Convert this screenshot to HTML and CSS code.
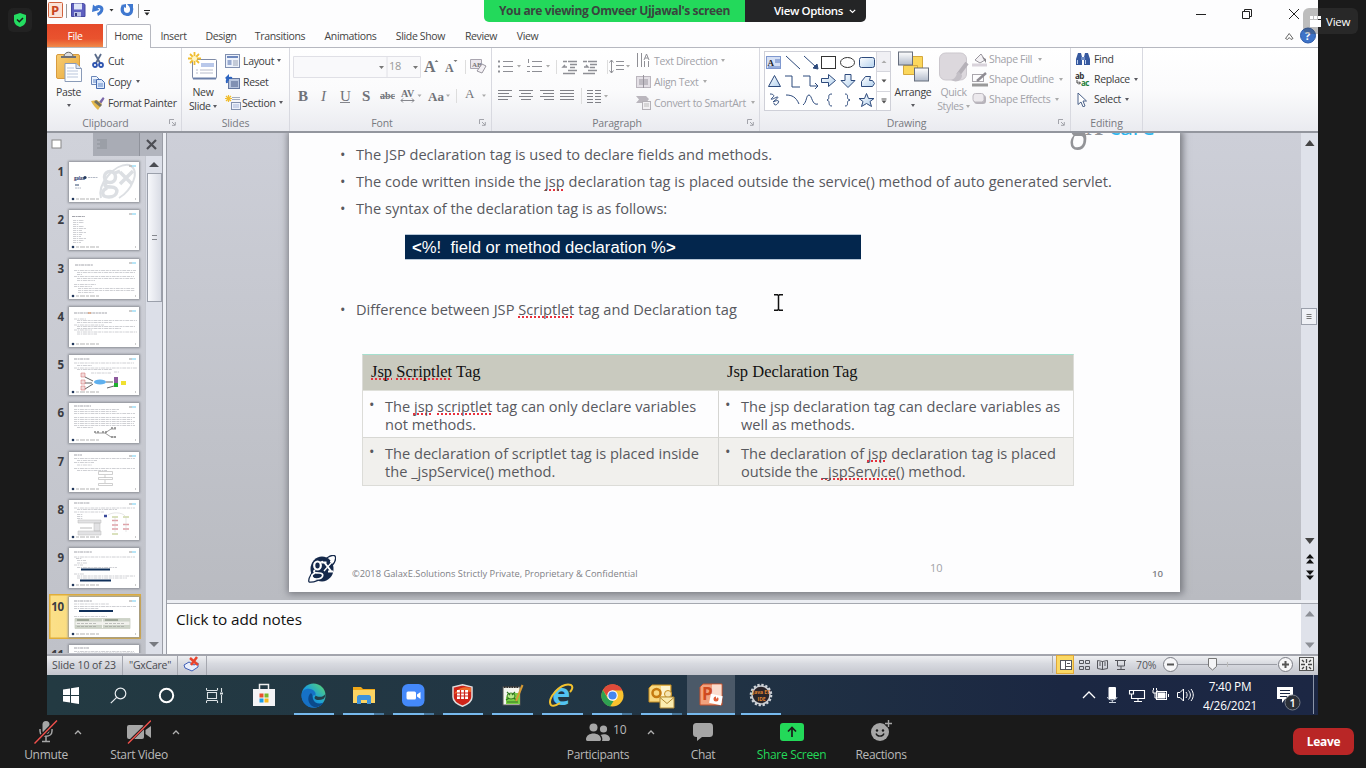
FILE: index.html
```html
<!DOCTYPE html>
<html lang="en">
<head>
<meta charset="utf-8">
<title>Screen share</title>
<link rel="stylesheet" href="styles.css">
</head>
<body>
<svg class="defs" width="0" height="0">
  <defs>
    <linearGradient id="gold" x1="0" y1="0" x2="1" y2="1"><stop offset="0" stop-color="#f7cd72"/><stop offset="1" stop-color="#e9a93c"/></linearGradient>
    <linearGradient id="steel" x1="0" y1="0" x2="0" y2="1"><stop offset="0" stop-color="#fff"/><stop offset="1" stop-color="#b3bccb"/></linearGradient>
    <linearGradient id="sky" x1="0" y1="0" x2="1" y2="1"><stop offset="0" stop-color="#fff"/><stop offset="1" stop-color="#b4d2ee"/></linearGradient>
    <linearGradient id="edge" x1="0" y1="1" x2="1" y2="0"><stop offset="0" stop-color="#0b5fb8"/><stop offset=".5" stop-color="#1c9fd8"/><stop offset="1" stop-color="#5fdc68"/></linearGradient>
    <symbol id="thumb" viewBox="0 0 70 40">
      <path d="M60 4h3" stroke="#bbb" stroke-width="1.500"/><path d="M63 4h4" stroke="#9fdcf5" stroke-width="1.500"/>
      <circle cx="4" cy="37" r="1.300" fill="#23395d"/><path d="M7 37h23" stroke="#aaa" stroke-width=".9" stroke-dasharray="3 1 5 1"/><path d="M66 37h1" stroke="#999"/>
    </symbol>
    <symbol id="gx" viewBox="0 0 28 28">
      <ellipse cx="14" cy="14" rx="11.500" ry="12.500" fill="#15294b"/>
      <path d="M1 27C-2 20 22-4 27 1c3 5-6 13-8 14M1 27c4 1 12-2 18-8" fill="none" stroke="#15294b" stroke-width="1.300"/>
      <g fill="none" stroke="#fff"><ellipse cx="9.500" cy="10.500" rx="3.300" ry="4" stroke-width="2.200"/><path d="M12 7.500l3-1" stroke-width="1.600"/><path d="M7 15c-3 2.500 1 3 4 3 6 0 4.500 6-2.500 6-6 0-6-4-1.500-6" stroke-width="1.700"/><path d="M16 7l7 9M13.500 7.500h5M20 16.500h5" stroke-width="2"/><path d="M25 6l-9 10M22 6.500h4" stroke-width="1.300"/></g>
    </symbol>
    <symbol id="launcher" viewBox="0 0 7 7"><path d="M.5 5V.5H5M3 3l3 3M6.300 3v3.300H3" fill="none" stroke="#9a9ba3" stroke-width=".9"/></symbol>
  </defs>
</svg>

<div class="stage">
  <aside class="side left"><div class="shield"><svg width="14" height="16" viewBox="0 0 14 16"><path d="M7 1l6 2v5c0 4-3 6-6 7-3-1-6-3-6-7V3z" fill="#24dd61"/><path d="M4 7.500l2.300 2.300L10 6" fill="none" stroke="#1a1a1a" stroke-width="1.500"/></svg></div></aside>

  <main class="desktop">
    <header class="titlebar">
      <svg width="110" height="24" viewBox="47 0 110 24">
        <rect x="48.500" y="2.500" width="14" height="15" rx="1" fill="#fbe3d8" stroke="#d0613c"/><text x="51" y="15" class="qat-p">P</text>
        <path d="M66.500 4v14M138.500 4v14" stroke="#999"/>
        <path d="M71.500 3.500h12l1.500 1v12H71.500z" fill="#5d5fc0" stroke="#4648a0"/><path d="M74 3.500h8v6h-8z" fill="#dfe6f8"/><path d="M74 12h7v4.500h-7z" fill="#bcc3e6"/><path d="M75 13h2v3h-2z" fill="#3a3c80"/>
        <path d="M95 8.500c4-4 8-1 6.500 2.500-1 2-2.500 3-4 3.500" fill="none" stroke="#3f78d0" stroke-width="3"/><path d="M92 12l1-7.500 6.500 5.500z" fill="#3f78d0"/>
        <path d="M109.500 9h4l-2 2.500z" fill="#333"/>
        <path d="M123 6c-2 5 0 8 4 8.500 4 0 6-4 4-8" fill="none" stroke="#3f78d0" stroke-width="3.200"/><path d="M127 4h6v7zM121 5l5-1v4z" fill="#3f78d0"/>
        <path d="M144 10.500h6" stroke="#222"/><path d="M144.500 12.500h5l-2.500 3z" fill="#222"/>
      </svg>
      <svg class="winbtns" width="118" height="24" viewBox="1190 0 118 24" fill="none" stroke="#222"><path d="M1196 14.500h10M1242.500 11.500h7v7h-7zM1244.500 11v-1.500h7v7H1250M1289 9l10 10M1299 9l-10 10"/></svg>
    </header>

    <nav class="tabs">
      <span class="tab file">File</span><span class="tab home">Home</span><span class="tab t-insert">Insert</span><span class="tab t-design">Design</span><span class="tab t-trans">Transitions</span><span class="tab t-anim">Animations</span><span class="tab t-show">Slide Show</span><span class="tab t-review">Review</span><span class="tab t-view">View</span>
      <svg class="help" width="36" height="22" viewBox="1282 25 36 22"><path d="M1285.500 38.500l3.700-5 3.800 5-2 1-1.800-2-1.700 2z" fill="#fff" stroke="#666"/><circle cx="1308" cy="35.500" r="7.500" fill="#3e73c8" stroke="#2a58a8"/><text x="1305" y="40" class="q">?</text></svg>
    </nav>

    <section class="ribbon">
      <div class="group g-clip">
        <div class="body">
          <div class="big w-paste">
            <svg width="28" height="32" viewBox="0 0 28 32"><rect x="1.500" y="3.500" width="23" height="24" rx="1.500" fill="url(#gold)" stroke="#d89b3f"/><path d="M6 5h15v2H6z" fill="#6e7078"/><path d="M9 5c1-5 8-5 9 0" fill="#ddd" stroke="#666"/><path d="M10 12.500h11l5.500 5v13H10z" fill="#fdfeff" stroke="#8a9bb8"/><path d="M12 17h7M12 20h11M12 23h11M12 26h11" stroke="#b9c6dc"/><path d="M21 12.500v5h5.500" fill="#dde7f5" stroke="#8a9bb8"/></svg>
            <span>Paste</span><i class="caret dk"></i>
          </div>
          <div class="rows r21 clip-rows">
            <div class="row"><svg width="14" height="16" viewBox="0 0 14 16"><path d="M4 1l5 9M10 1L5 10" stroke="#5a6b8a" stroke-width="1.800"/><circle cx="4" cy="12" r="2" fill="none" stroke="#2f55b0" stroke-width="1.800"/><circle cx="10" cy="12" r="2" fill="none" stroke="#2f55b0" stroke-width="1.800"/></svg><span>Cut</span></div>
            <div class="row w-copy"><svg width="14" height="14" viewBox="0 0 14 14"><path d="M.5 1.500h5l3 3v5h-8z" fill="#eef4fd" stroke="#6b86b8"/><path d="M5.500 4.500h5l3 3v6h-8z" fill="#dce8fa" stroke="#456bb0"/><path d="M2 5h3M2 7h3M7 9h5M7 11h5" stroke="#5f86c8"/></svg><span>Copy</span><i class="caret dk"></i></div>
            <div class="row"><svg width="14" height="14" viewBox="0 0 14 14"><path d="M8 6l4-5 1.500 1.500L10 8z" fill="#7a67a8"/><path d="M0 5l6-1 5 4-4 6C4 11 2 9 0 5z" fill="#e3b84c"/><path d="M5 4l6 5-2 2-6-5z" fill="#6e6e62"/></svg><span>Format Painter</span></div>
          </div>
        </div>
        <div class="cap l">Clipboard<svg class="ln" width="7" height="7"><use href="#launcher"/></svg></div>
      </div>
      <div class="group g-slides">
        <div class="body">
          <div class="big w-new">
            <svg width="32" height="32" viewBox="0 0 32 32"><rect x="5.500" y="8.500" width="24" height="19" rx="1" fill="#fff" stroke="#7f8ba6"/><path d="M6 27.500h23" stroke="#6b7fa8" stroke-width="2"/><path d="M14 14h13" stroke="#b9c8ea" stroke-width="4"/><path d="M9 19h2M13 19h13M9 22h2M13 22h13" stroke="#b8bccb"/><path d="M7.500 1v13M1 7.500h13M3 3l9 9M12 3l-9 9" stroke="#f0bd2f" stroke-width="1.800"/><circle cx="7.500" cy="7.500" r="2.500" fill="#fff6c5"/></svg>
            <span>New</span><span class="inl">Slide <i class="caret dk"></i></span>
          </div>
          <div class="rows r21 slide-rows">
            <div class="row w-lay"><svg width="15" height="14" viewBox="0 0 15 14"><rect x=".5" y=".5" width="14" height="13" fill="#edf2fb" stroke="#8190b0"/><path d="M2 3h11" stroke="#6d87bd" stroke-width="2"/><path d="M2.500 6h4v5h-4z" fill="#99abd0"/><path d="M8 7h5M8 9h5M8 11h5" stroke="#9aa3b5"/></svg><span>Layout</span><i class="caret dk"></i></div>
            <div class="row"><svg width="15" height="15" viewBox="0 0 15 15"><rect x="3.500" y="4.500" width="11" height="10" fill="#b8c5de" stroke="#6578a0"/><path d="M6 8h7M6 10h7M6 12h7" stroke="#4a5c88"/><path d="M2 9c-1-4 2-6 5-5" fill="none" stroke="#2d64c0" stroke-width="2"/><path d="M0 4l4-4v7z" fill="#2d64c0"/></svg><span>Reset</span></div>
            <div class="row w-sec"><svg width="16" height="15" viewBox="0 0 16 15"><path d="M7 2.500h8M7 4.500h8" stroke="#a5adbb"/><rect x="6.500" y="7.500" width="9" height="7" fill="#eef2fa" stroke="#8391ad"/><path d="M8 10h6M8 12h6" stroke="#a9b7d8"/><path d="M3.500 0v7M0 3.500h7M1 1l5 5M6 1L1 6" stroke="#f0bd2f" stroke-width="1.200"/></svg><span>Section</span><i class="caret dk"></i></div>
          </div>
        </div>
        <div class="cap">Slides</div>
      </div>
      <div class="group g-font">
        <svg class="strip" width="200" height="68" viewBox="290 48 200 68">
          <path d="M293.500 56.500h93.500v21h-93.500zM387 56.500h33.500v21H387" fill="#f9f9fb" stroke="#e0e0e6"/>
          <path d="M379 66h5l-2.500 3zM413 66h5l-2.500 3z" fill="#777"/>
          <text x="389" y="70" class="sz">18</text>
          <g class="sf" fill="#707278"><text x="424" y="72" font-size="16" font-weight="bold">A</text><text x="445" y="72" font-size="12" font-weight="bold">A</text>
            <text x="298" y="101" font-size="15" font-weight="bold">B</text><text x="321" y="101" font-size="15" font-style="italic">I</text><text x="340" y="101" font-size="15">U</text><text x="362" y="101" font-size="15" font-weight="bold">S</text><text x="380" y="99" font-size="10" font-weight="bold">abc</text><text x="401" y="97" font-size="10" font-weight="bold">AV</text><text x="428" y="101" font-size="13" font-weight="bold">Aa</text><text x="465" y="98" font-size="13">A</text></g>
          <path d="M340 102.500h10M380 96.500h15M401 100.500h13M403 98.500l-2 2 2 2M412 98.500l2 2-2 2" fill="none" stroke="#85868c"/>
          <path d="M434.500 62l2-2 2 2zM453.500 60h4l-2 2z" fill="#777"/>
          <path d="M465.500 60v14M456.500 89v14" stroke="#ddd"/>
          <path d="M417.500 94.500h4l-2 2.500zM446 94.500h4l-2 2.500zM482 94.500h4l-2 2.500z" fill="#aaa"/>
          <path d="M470.500 59.500h11v9h-11z" fill="#ece8ee" stroke="#aaa6b0"/><text x="472" y="67" font-size="7" font-weight="bold" class="sf" fill="#777">AB</text><path d="M477 71l5-7 4 2-4 7z" fill="#f4f1f5" stroke="#9a97a0"/>
        </svg>
        <div class="cap l">Font<svg class="ln" width="7" height="7"><use href="#launcher"/></svg></div>
      </div>
      <div class="group g-para">
        <div class="body">
          <svg class="pstrip" width="141" height="68" viewBox="492 48 141 68" fill="none" stroke="#8e8f95">
            <path d="M503 61.500h10M503 66.500h10M503 71.500h10M532 61.500h10M532 66.500h10M532 71.500h10"/><path d="M498 61.500h2M498 66.500h2M498 71.500h2" stroke-width="2"/><path d="M528.500 59v4M527 66.500h3M527 71.500h3"/>
            <path d="M563 61.500h4M568 61.500h9M570 64.500h7M570 67.500h5M568 70.500h9M563 73.500h12M583 61.500h4M588 61.500h9M590 64.500h7M590 67.500h5M588 70.500h9M583 73.500h12M567 67H563l2-2M584 67h4l-2-2" stroke-width="1.400"/>
            <path d="M616 61.500h8M616 65.500h8M616 69.500h8M611.500 60v13M609.500 62.500l2-2.500 2 2.500M609.500 70.500l2 2.500 2-2.500"/>
            <path d="M498 90.500h14M498 93.500h11M498 96.500h14M498 99.500h10M519 90.500h14M521 93.500h10M519 96.500h14M521 99.500h10M540 90.500h14M543 93.500h11M540 96.500h14M544 99.500h10M560 90.500h14M560 93.500h14M560 96.500h14M560 99.500h14M587 90.500h6M595 90.500h6M587 93.500h6M595 93.500h6M587 96.500h6M595 96.500h6M587 99.500h6M595 99.500h6M587 102.500h6M595 102.500h6" stroke="#808187"/>
            <path d="M556.500 60v14M607.500 60v14M581.500 88v16" stroke="#ddd"/>
            <path d="M517 65h4l-2 2.500zM546 65h4l-2 2.500zM626 65h4l-2 2.500zM604 95h4l-2 2.500z" fill="#aaa" stroke="none"/>
          </svg>
          <div class="rows r21 para-rows off">
            <div class="row w-td"><svg width="15" height="15" viewBox="0 0 15 15" stroke="#8f8f95" fill="none"><path d="M1.500 0v14M5.500 0v14M8.500 8v6M12.500 8v6M8 7l2.500-6L13 7M9 5h3"/></svg><span>Text Direction</span><i class="caret"></i></div>
            <div class="row w-at"><svg width="15" height="15" viewBox="0 0 15 15"><rect x=".5" y="2.500" width="14" height="11" fill="#e4e0e6" stroke="#bbb6be"/><path d="M3 6h9M3 8h9M3 10h9M7.500 1v13" stroke="#99959e"/></svg><span>Align Text</span><i class="caret"></i></div>
            <div class="row w-sa"><svg width="15" height="15" viewBox="0 0 15 15"><path d="M0 1h10l3 3-3 4H0l3-3.500z" fill="#bab6bd"/><rect x="6.500" y="6.500" width="8" height="8" fill="#f2f0f3" stroke="#b3b0b6"/><path d="M8 9h5M8 11h5" stroke="#bbb"/></svg><span>Convert to SmartArt</span><i class="caret"></i></div>
          </div>
        </div>
        <div class="cap l">Paragraph<svg class="ln" width="7" height="7"><use href="#launcher"/></svg></div>
      </div>
      <div class="group g-draw">
        <div class="body">
          <svg class="gallery" width="127" height="60" viewBox="764 51 127 60">
            <rect x="764.500" y="51.500" width="126" height="59" fill="#fff" stroke="#cfd0d8"/><path d="M876.500 52v58M877 71.500h13M877 91.500h13" stroke="#d5d6dd"/><path d="M877 52h13v19h-13z" fill="#f0f0f4"/>
            <path d="M881.500 63h5l-2.500-2.500z" fill="#aaa"/><path d="M881.500 79.500h5l-2.500 3zM881.500 100.500h5l-2.500 3zM881.500 98.500h5v1h-5z" fill="#555"/>
            <rect x="766.500" y="56.500" width="14" height="12" fill="#d5e0f5" stroke="#7f98cf"/><text x="767.500" y="66" class="sf" font-size="9" font-weight="bold" fill="#222">A</text><path d="M775 60h5M775 62h5M768 67h12" stroke="#5578c0"/>
            <g fill="none" stroke="#2d4a7c">
              <path d="M786 56l14 13M804 56l12 11"/><path d="M818 69l-1-5-4 4z" fill="#2d4a7c"/><rect x="821.500" y="56.500" width="14" height="12" stroke="#333"/><ellipse cx="847.500" cy="62.500" rx="7" ry="5" stroke="#333"/><rect x="859.500" y="57.500" width="15" height="10" rx="2" fill="url(#sky)"/>
              <path d="M768.500 86.500l6-11 6 11z" fill="url(#sky)"/><path d="M785 76h7v11h8M803 76h7v10h8M815 83l3 3-3 3"/><path d="M821.500 78.500h7v-4l7 6-7 6v-4h-7z" fill="url(#sky)"/><path d="M845 74.500h6v6h4l-7 7-7-7h4z" fill="url(#sky)"/><path d="M861.500 86.500v-5l4-5h5l-1 4h3l2 3-2 3z" fill="url(#sky)"/>
              <path d="M770 94c4 0 5 2 2 4-3 3 3 0 5-1 3 0-2 3-4 5 4-2 7-2 5 1-1 2-4 3-4 0"/><path d="M786 95c6 0 10 2 13 9M803 105c4-3 3-10 6-10s3 11 9 9"/><path d="M832 94c-6 0-1 5-5 6 4 1 0 6 5 6M845 94c5 0 0 5 5 6-5 1 0 6-5 6"/><path d="M866.500 93.500l2 5h5.500l-4 3 1.500 5-5-3-5 3 1.500-5-4-3h5.500z" fill="url(#sky)"/>
            </g>
          </svg>
          <div class="big w-arr">
            <svg width="32" height="32" viewBox="0 0 32 32"><path d="M11.500 5.500h14v13h-14z" fill="#fbd75c" stroke="#d5a83c"/><path d="M6.500 14.500h14v9h-14z" fill="#fbd75c" stroke="#d5a83c"/><rect x="1.500" y="1" width="14" height="13" fill="url(#steel)" stroke="#666e7d"/><rect x="17.500" y="17" width="14" height="13" fill="url(#steel)" stroke="#666e7d"/></svg>
            <span>Arrange</span><i class="caret dk"></i>
          </div>
          <div class="big w-qs off">
            <svg width="31" height="32" viewBox="0 0 31 32"><rect x="1.500" y="2" width="27" height="27" rx="6" fill="#dcd8dd" stroke="#cbc7cd"/><path d="M29 12l-9 12" stroke="#b5b1b8" stroke-width="4"/><path d="M21 21c-3 0-2 7-8 8 5 3 11 1 11-5z" fill="#c3bfc6"/></svg>
            <span>Quick</span><span class="inl">Styles <i class="caret"></i></span>
          </div>
          <div class="rows r20 off">
            <div class="row w-sf"><svg width="16" height="15" viewBox="0 0 16 15"><path d="M3 8l6-6 4 6-5 3z" fill="#f4f2f5" stroke="#99959d"/><path d="M10 5l4 2v4z" fill="#8a878e"/><path d="M0 13h15" stroke="#d9d3db" stroke-width="3"/></svg><span>Shape Fill</span><i class="caret"></i></div>
            <div class="row w-so"><svg width="16" height="15" viewBox="0 0 16 15"><rect x=".5" y="2.500" width="11" height="7" fill="none" stroke="#a9a6ac"/><path d="M5 9l9-8" stroke="#8f8c93" stroke-width="2.500"/><path d="M0 13h16" stroke="#999" stroke-width="3"/></svg><span>Shape Outline</span><i class="caret"></i></div>
            <div class="row w-se"><svg width="16" height="15" viewBox="0 0 16 15"><rect x="2" y="3" width="12" height="9" rx="3" fill="#b7b3ba"/><rect x="1" y="1.500" width="11" height="8.500" rx="2.500" fill="#ece9ed" stroke="#bcb8bf"/></svg><span>Shape Effects</span><i class="caret"></i></div>
          </div>
        </div>
        <div class="cap l">Drawing<svg class="ln" width="7" height="7"><use href="#launcher"/></svg></div>
      </div>
      <div class="group g-edit">
        <div class="body">
          <div class="rows r20 edit-rows">
            <div class="row"><svg width="16" height="14" viewBox="0 0 16 14"><path d="M3 1h3l1 4v8H1V7zM10 1h3l2 6v6H9V5z" fill="#37599f"/><path d="M6 5h4v3H6z" fill="#6f8cc4"/><path d="M2.500 8v4M10.500 8v4" stroke="#bcd0f0"/></svg><span>Find</span></div>
            <div class="row w-rep"><svg width="16" height="15" viewBox="0 0 16 15"><text x="0" y="7" class="ab" fill="#333">ab</text><text x="6" y="14" class="ab" fill="#23803a">ac</text><path d="M2 8v3h3M4 9.500l1.500 1.500L4 12.500" fill="none" stroke="#444"/></svg><span>Replace</span><i class="caret dk"></i></div>
            <div class="row w-sel"><svg width="16" height="15" viewBox="0 0 16 15"><path d="M3 1l8.500 8H8l2 5-2 .8L6 10l-3 2.500z" fill="#fff" stroke="#4b6188"/></svg><span>Select</span><i class="caret dk"></i></div>
          </div>
        </div>
        <div class="cap">Editing</div>
      </div>
    </section>

    <section class="work">
      <div class="outline">
        <div class="otabs"><span class="ot on"><svg width="12" height="11"><rect x="2" y="1" width="9" height="8" fill="#fff" stroke="#888"/></svg></span><span class="ot"><svg width="12" height="11"><path d="M1 1h10M4 3h7M1 5h10M4 7h7M1 9h10" stroke="#8d9199" stroke-width="1.200"/></svg></span><span class="ox"><svg width="11" height="11"><path d="M1 1l9 9M10 1L1 10" stroke="#4c4e54" stroke-width="2.200"/></svg></span></div>
        <div class="obody">
          <div class="thumbs">
            <div class="th"><b>1</b><svg class="sl" width="70" height="40"><g fill="none" stroke="#dcdfe3" stroke-width="3.500"><path d="M32 36c-4-14 14-35 28-33 13 5 2 26-10 33" stroke-width="2"/><circle cx="41" cy="15" r="5.500"/><path d="M46 11l5-2M38 20c-5 4 0 5 4 5 9 0 7 10-2 10-8 0-8-6-2-9M51 10l12 12M64 9L51 22"/></g><use href="#thumb"/><text x="5" y="17.500" class="tiny">galax</text><circle cx="16" cy="15.500" r="1.600" fill="#23395d"/><path d="M19 15.500h10M6 26h6" stroke="#b4bac6" stroke-dasharray="2 .5"/><path d="M6 23h4" stroke="#33496d"/></svg></div>
            <div class="th"><b>2</b><svg class="sl" width="70" height="40"><use href="#thumb"/><path d="M3 6.500h13" class="tl"/><path d="M4 10.500h11M4 12.500h11M4 14.500h6M4 16.500h11M4 18.500h13M4 20.500h9M4 22.500h13M4 24.500h9M4 26.500h8M4 28.500h13M4 30.500h11M4 32.500h8" class="tx"/></svg></div>
            <div class="th"><b>3</b><svg class="sl" width="70" height="40"><use href="#thumb"/><path d="M6 6h18" class="tl"/><path d="M5 11.500h62M8 13.500h58M8 15.500h5M5 17.500h60M8 19.500h58M8 21.500h18M5 25.500h22M5 27.500h18M9 29.500h57M9 31.500h57M9 33.500h16" class="tx"/></svg></div>
            <div class="th"><b>4</b><svg class="sl" width="70" height="40"><use href="#thumb"/><path d="M5 6h33" class="tl"/><path d="M19 6h3" stroke="#e08a50"/><path d="M5 12h12M8 13.500h60M8 15.500h35M5 18h30M8 19.500h58M8 21.500h44M5 23h18M8 25h60M8 27h20" class="tx"/></svg></div>
            <div class="th"><b>5</b><svg class="sl" width="70" height="40"><use href="#thumb"/><path d="M5 4h16" class="tl"/><path d="M5 8h60M8 10.500h15M5 13h63M8 14.500h35M22 18h20M45 17h5" class="tx"/><path d="M16 22l8 4M16 34l8-5M16 28h7M37 27h7M38 33l7-2" stroke="#222" stroke-width=".7"/><path d="M12 18h4v4h-4zM12 25h4v4h-4zM12 31h4v4h-4z" fill="#f2dada" stroke="#c66" stroke-width=".5"/><ellipse cx="31" cy="27" rx="6" ry="2.500" fill="#5fb0ee"/><path d="M45 22h4v6h-4z" fill="#8d5a9d"/><path d="M45 28h4v4h-4z" fill="#20b030"/><path d="M52 26h5v4h-5z" fill="#f0e030"/></svg></div>
            <div class="th"><b>6</b><svg class="sl" width="70" height="40"><use href="#thumb"/><path d="M5 3h17" class="tl"/><path d="M5 6.500h45M5 8.500h43M5 10.500h61M5 14.500h61M5 16.500h58M5 18.500h61M5 20.500h60M5 22.500h61M8 24.500h16" class="tx"/><path d="M26 30h10l6-4h5M36 30l6 4h5" stroke="#555" stroke-width=".6" fill="none"/><path d="M25 29h6M33 29h5M42 25h5M42 34h6" stroke="#888" stroke-width="1.500" stroke-dasharray="2 1"/></svg></div>
            <div class="th"><b>7</b><svg class="sl" width="70" height="40"><use href="#thumb"/><path d="M5 3h8" class="tl"/><path d="M5 6.500h61M8 8.500h20M5 10.500h20M8 13h15M5 16.500h61M8 18.500h30" class="tx"/><path d="M29.500 19.500h14v3h-14zM29.500 25.500h14v2h-14zM29.500 31.500h14v2h-14zM36 23v3M36 28v3" fill="none" stroke="#bbb" stroke-width=".7"/></svg></div>
            <div class="th"><b>8</b><svg class="sl" width="70" height="40"><use href="#thumb"/><path d="M5 3h16" class="tl"/><path d="M5 8h61M8 9.500h40M5 12h30M8 14.500h6M8 16.500h6M8 18.500h6" class="tx"/><path d="M9 20h23v3H9zM9 31h23v4H9zM25 23h6v8h-6z" fill="#e2e2e4" stroke="#bbb" stroke-width=".5"/><path d="M11 28h12" stroke="#bbb"/><path d="M35 16h3" stroke="#3a4a9a" stroke-width="2.500"/><path d="M43 17h6M54 17h6M43 34h6" stroke="#b5c47c" stroke-width="1.200"/><path d="M43 20.500h6M43 25h6M43 29h6M54 24.500h6M54 29h6" stroke="#dfa0a6" stroke-width="1.500"/><path d="M57 17v15M46 17v15M39 15c4-3 14-3 17 1" fill="none" stroke="#ccc" stroke-width=".5"/></svg></div>
            <div class="th"><b>9</b><svg class="sl" width="70" height="40"><use href="#thumb"/><path d="M5 4h18" class="tl"/><path d="M5 9h61M7 10.500h6M8 12.500h9M8 15h10M5 17h9M8 19.500h40M5 26h10M8 28h58M8 30h50" class="tx"/><path d="M12 21.500h29M11 32.500h31" stroke="#10305a" stroke-width="2"/></svg></div>
            <div class="th cur"><b>10</b><svg class="sl" width="70" height="40"><use href="#thumb"/><path d="M5 4h18" class="tl"/><path d="M5 7h35M5 9.500h62M5 11.500h25M5 19.500h33" class="tx"/><path d="M10 14h34" stroke="#10305a" stroke-width="2"/><path d="M6 21.500h55v10H6z" fill="#f1f1ed" stroke="#c3c8bc" stroke-width=".7"/><path d="M6 21.500h55v3H6zM6 28h55v3H6z" fill="#cdd3c8"/><path d="M33.500 22v9" stroke="#f4f4f0"/><path d="M8 23h12M36 23h13" stroke="#667060" stroke-width=".9"/><path d="M8 26.500h20M36 26.500h20M8 29.500h20M36 29.500h20" stroke="#9a9c98" stroke-width=".6" stroke-dasharray="3 1"/></svg></div>
            <div class="th"><b>11</b><svg class="sl" width="70" height="40"><path d="M5 3h15" class="tl"/><path d="M5 6.500h60M8 8h58" class="tx"/></svg></div>
          </div>
          <div class="osb"><i class="up"></i><div class="knob"><i></i></div><i class="down"></i></div>
        </div>
      </div>
      <div class="split"></div>
      <div class="pane">
        <div class="canvas">
          <div class="view">
            <article class="slide">
              <div class="brand"><span class="bg">g</span><span class="bx">x</span><span class="bc">care</span></div>
              <ul class="pts">
                <li>The JSP declaration tag is used to declare fields and methods.</li>
                <li class="long">The code written inside the <u>jsp</u> declaration tag is placed outside the service() method of auto generated servlet.</li>
                <li>The syntax of the declaration tag is as follows:</li>
              </ul>
              <div class="code"><b>&lt;</b>%!&nbsp; field or method declaration %<b>&gt;</b></div>
              <ul class="pts second"><li class="long">Difference between JSP <u>Scriptlet</u> tag and Declaration tag</li></ul>
              <div class="table">
                <div class="hd"><u>Jsp</u> <u>Scriptlet</u> Tag</div><div class="hd r">Jsp Declaration Tag</div>
                <div class="td">The <u>jsp</u> <u>scriptlet</u> tag can only declare variables<br>not methods.</div><div class="td r">The jsp declaration tag can declare variables as<br>well as methods.</div>
                <div class="td alt">The declaration of scriptlet tag is placed inside<br>the _jspService() method.</div><div class="td alt r">The declaration of <u>jsp</u> declaration tag is placed<br>outside the <u>_jspService</u>() method.</div>
              </div>
              <footer class="foot"><svg width="28" height="28"><use href="#gx"/></svg><span class="copy">©2018 GalaxE.Solutions Strictly Private, Proprietary &amp; Confidential</span><span class="n1">10</span><span class="n2">10</span></footer>
              <svg class="ibeam" width="11" height="17" viewBox="0 0 11 17"><path d="M1 .8h3.500l1 1 1-1H10M1 16.200h3.500l1-1 1 1H10M5.500 2v13" fill="none" stroke="#111" stroke-width="1.500"/></svg>
            </article>
          </div>
          <svg class="vsb" width="17" height="467" viewBox="1301 133 17 467"><path d="M1305 146h9.500l-4.700-6z" fill="#444"/><rect x="1301.500" y="308.500" width="15" height="16" fill="#eff1f6" stroke="#9ba0ab"/><path d="M1306.500 314.500h5M1306.500 316.500h5M1306.500 318.500h5" stroke="#777"/><path d="M1305 538h9.500l-4.700 6z" fill="#444"/><path d="M1306 558.500h8l-4-4.500zM1306 563.500h8l-4-4.500zM1306 570.500h8l-4 4.500zM1306 575.500h8l-4 4.500z" fill="#111"/></svg>
        </div>
        <div class="notes"><span>Click to add notes</span><svg class="nsb" width="17" height="49" viewBox="1301 604 17 49"><path d="M1305 616h9.500l-4.700-5.500zM1305 642h9.500l-4.700 5.500z" fill="#8c8f96"/></svg></div>
      </div>
    </section>

    <section class="status">
      <span class="s1">Slide 10 of 23</span><span class="s2">"GxCare"</span>
      <span class="s3"><svg width="18" height="16" viewBox="0 0 18 16"><path d="M1 9l5-3 5 3 4-2v4l-6 4-7-3z" fill="#e8eefb" stroke="#3f5fb8"/><path d="M7 2l8 7M14 1L8 9" stroke="#e8432c" stroke-width="2.500"/></svg></span>
      <svg class="zoomer" width="264" height="21" viewBox="1054 654 264 21">
        <path d="M1052.500 656v17" stroke="#aaa"/><rect x="1056.500" y="655.500" width="17" height="18" fill="#fbd964" stroke="#dfa838"/>
        <g fill="none" stroke="#55565c"><rect x="1060.500" y="660.500" width="11" height="9" fill="#fff"/><path d="M1065.500 661v8M1066 666.500h5M1067 663.500h3"/><path d="M1079.500 660.500h4v3h-4zM1085.500 660.500h4v3h-4zM1079.500 666.500h4v3h-4zM1085.500 666.500h4v3h-4z"/><path d="M1097.500 660.500l5 1 5-1v8l-5 1-5-1zM1102.500 661v9M1099 663h2M1099 665h2M1104 663h2M1104 665h2"/><path d="M1115 660.500h11M1117.500 661v5h7v-5M1121 666v3M1117 669.500h8"/></g>
        <text x="1136" y="669" class="pct">70%</text>
        <path d="M1178 664.500h99" stroke="#9a9ca4"/><path d="M1227.500 662v5" stroke="#bbb"/>
        <circle cx="1170.500" cy="664.500" r="7" fill="#f6f6f8" stroke="#7b7d85"/><path d="M1167 664.500h7" stroke="#555" stroke-width="2"/>
        <circle cx="1285.500" cy="664.500" r="7" fill="#f6f6f8" stroke="#7b7d85"/><path d="M1282 664.500h7M1285.500 661v7" stroke="#555" stroke-width="2"/>
        <path d="M1208.500 658.500h8v8l-4 3.500-4-3.500z" fill="#f4f4f6" stroke="#777"/>
        <rect x="1299.500" y="657.500" width="14" height="13" fill="#eee" stroke="#555"/><path d="M1306.500 659v4M1306.500 666v4M1301 664.500h4M1308 664.500h4M1302 660l2 2M1311 660l-2 2M1302 669l2-2M1311 669l-2-2" stroke="#444" stroke-width="1.300"/>
      </svg>
    </section>

    <section class="taskbar">
      <div class="tk s"><svg width="16" height="17" viewBox="0 0 16 17"><path d="M0 2.500l7-1V8H0zM8 1.300L16 0v8H8zM0 9h7v6.500l-7-1zM8 9h8v8l-8-1.200z" fill="#fff"/></svg></div>
      <div class="tk s"><svg width="17" height="17" viewBox="0 0 17 17" fill="none" stroke="#e9edf0" stroke-width="1.200"><circle cx="10.500" cy="6.500" r="5.300"/><path d="M6.700 10.300L.8 16.200"/></svg></div>
      <div class="tk s"><svg width="17" height="17"><circle cx="8.500" cy="8.500" r="6.700" fill="none" stroke="#fff" stroke-width="2"/></svg></div>
      <div class="tk s"><svg width="17" height="17" fill="none" stroke="#dde3e6" stroke-width="1.100"><path d="M.5 3.500h11M1.500 5.500h9v6h-9zM.5 13.500h11M.5 1v2M11.500 1v2M.5 14v2M11.500 14v2M15.500 1v4M15.500 8v8"/><path d="M14 6.500h3" stroke-width="2"/></svg></div>
      <div class="tk"><svg width="24" height="24"><path d="M7.500 6V1.500h9V6" fill="none" stroke="#eee" stroke-width="1.500"/><path d="M1 6h22v17H1z" fill="#f3f3f5"/><path d="M7.500 10.500h4v4h-4z" fill="#e8502c"/><path d="M12.500 10.500h4v4h-4z" fill="#7db82b"/><path d="M7.500 15.500h4v4h-4z" fill="#1a9ce6"/><path d="M12.500 15.500h4v4h-4z" fill="#f8b81c"/></svg></div>
      <div class="tk run"><svg width="25" height="25"><circle cx="12.500" cy="12.500" r="12" fill="url(#edge)"/><path d="M.6 12C1 6 7 4.500 11 6.500c4 2 4 5 3 6-3-1-5 4-2 7 3 2.500 7 2 10 .5-4 6-13 6.500-18 1C1.500 18.500.5 15 .6 12z" fill="#1671c6"/><path d="M10 10c-4 3-4 11 3 14 4 .5 8-2 9.500-4.500-4 2-9 1-10.500-3.500-.5-2 0-4-2-6z" fill="#0b4a8c"/><path d="M14.500 12.500c0 1-1 1.500-1 2.500 0 2 5 3 9 1 1-1 2-3 2-5-3 4-8 3-10 1.500z" fill="#23414c"/></svg></div>
      <div class="tk run two"><svg width="22" height="20"><path d="M0 2h8l2 2h12v14H0z" fill="#f0a818"/><path d="M0 5h22v13H0z" fill="#fcd462"/><path d="M4 19v-7c0-1 1-2 2-2h10c1 0 2 1 2 2v7h-4v-4H8v4z" fill="#3e93dc"/></svg></div>
      <div class="tk run two"><svg width="23" height="23"><rect width="22.500" height="22.500" rx="6" fill="#4489fa"/><rect x="4.500" y="7.500" width="9.500" height="8" rx="1.500" fill="#fff"/><path d="M15 10.500l3.500-2.500v7l-3.500-2.500z" fill="#fff"/></svg></div>
      <div class="tk run"><svg width="21" height="23"><path d="M10.500.8L20 3v10c0 5-5 7.500-9.500 9.200C6 20.500 1 18 1 13V3z" fill="#cf2419" stroke="#ddd" stroke-width="1.500"/><path d="M2 10C8 2 14 3 19 4v4C12 6 7 8 2 10z" fill="#f06a28"/><path d="M5 6h11v9H5z" fill="#fff"/><path d="M5 9h11M5 12h11M8.500 6v9M12.500 6v9" stroke="#cf2419" stroke-width="1.200"/></svg></div>
      <div class="tk run"><svg width="22" height="23"><rect x="1" y="3" width="17" height="18" fill="#f4f6ee" stroke="#555"/><path d="M2 3h15" stroke="#333" stroke-width="2" stroke-dasharray="1.500 1"/><path d="M10 9h8v11H4v-7z" fill="#79cf43"/><ellipse cx="9" cy="12" rx="4" ry="3" fill="#b6e889" stroke="#3b7d20"/><path d="M5 8l3 3M13 8l-3 3M4 16l3-2M12 14l3 3M5 18h11" stroke="#2f7420" stroke-width="1.200"/><path d="M20.500 1L14 17" stroke="#d59a35" stroke-width="2"/></svg></div>
      <div class="tk run"><svg width="26" height="24"><text x="3" y="22" class="ie">e</text><path d="M2 22C-3 16 12-1 22 2c3 2 0 6-1 7M2 22c2 2 6 0 9-2" fill="none" stroke="#f2c12e" stroke-width="2"/></svg></div>
      <div class="tk run two"><svg width="23" height="23" viewBox="0 0 24 24"><circle cx="12" cy="12" r="11.500" fill="#f9c22e"/><path d="M12 .5A11.500 11.500 0 0 1 22.200 6.500H12z" fill="#df4a3a"/><path d="M2 6.200A11.500 11.500 0 0 1 22.200 6.500H12L8 15z" fill="#df4a3a"/><path d="M2 6.200l5 8.700 6 3-3.500 5.500A11.500 11.500 0 0 1 2 6.200z" fill="#2fa152"/><circle cx="12" cy="12" r="5.500" fill="#fff"/><circle cx="12" cy="12" r="4.300" fill="#4486ee"/></svg></div>
      <div class="tk run two"><svg class="lo" width="27" height="26"><path d="M4 1h19v17H1V4z" fill="#f9d880" stroke="#c78e20"/><path d="M13 2h9v10h-9z" fill="#fdf3ce"/><circle cx="8.500" cy="9" r="4" fill="none" stroke="#c5790f" stroke-width="2.500"/><circle cx="20" cy="10" r="3.500" fill="#f6e5b2" stroke="#c78e20"/><path d="M12 13h14v11H12z" fill="#fbecaf" stroke="#b38a34"/><path d="M12 13.500l7 6 7-6" fill="none" stroke="#b38a34"/></svg></div>
      <div class="tk run act"><svg width="24" height="24"><path d="M4 1h19v21H1V4z" fill="#f2a27e" stroke="#c8502b"/><path d="M13 1.500h9.500V20H13z" fill="#fbdccd"/><text x="3" y="17" class="ppt">P</text><path d="M11 12h12v9H11z" fill="#fff" transform="rotate(12 17 16)"/><circle cx="17" cy="16" r="2.500" fill="#e2603a"/><path d="M17 16v-3h3z" fill="#fff"/></svg></div>
      <div class="tk run"><svg width="24" height="24"><circle cx="12" cy="12" r="9.800" fill="none" stroke="#cfd3d8" stroke-width="3" stroke-dasharray="2.200 1.650"/><circle cx="12" cy="12" r="9" fill="#2a2429" stroke="#c9cdd2" stroke-width="1.500"/><text x="3.500" y="11" class="jv">Java EE</text><text x="8.500" y="17.500" class="jv">IDE</text></svg></div>
      <svg class="tray" width="118" height="39" viewBox="1078 675 118 39" fill="none" stroke="#fff">
        <path d="M1083 698l6-6 6 6" stroke-width="1.300"/><rect x="1108.500" y="687" width="7.500" height="12" rx="1" fill="#fff" stroke="none"/><path d="M1107.500 697c0 4 9.500 4 9.500 0M1112.300 700v3M1109 702.500h7" stroke="#cfd6e0"/>
        <path d="M1133 690.500h11.500v8h-13v-5M1138 698.500v3M1134 701.500h8M1129 690.500h4M1129.500 690v4h4v-4" stroke-width="1.100"/>
        <rect x="1156.500" y="691.500" width="10" height="8"/><path d="M1158 693h7v5h-7z" fill="#fff"/><path d="M1168.500 694v3M1153 690v3h4v-3M1155 693v5h3M1153.500 688v2M1156.500 688v2"/>
        <path d="M1177.500 692.500h2.500l3.500-3.500v12l-3.500-3.500h-2.500zM1186 692c1.500 2 1.500 4 0 6M1188.500 690.500c2.500 3 2.500 6 0 9M1191 689c3 4 3 8 0 12"/>
      </svg>
      <div class="clock"><span>7:40 PM</span><span>4/26/2021</span></div>
      <svg class="notif" width="46" height="39" viewBox="1272 675 46 39"><path d="M1277 687h16v12h-8l-3 4v-4h-5z" fill="#fff"/><path d="M1280 690.500h10M1280 693.500h10M1280 696.500h7" stroke="#1c2a45"/><circle cx="1292.500" cy="702.500" r="7.500" fill="#2b3038" stroke="#777d88"/><text x="1289.500" y="707" class="nb">1</text><path d="M1313.500 675v40" stroke="#8a94a8"/></svg>
    </section>
  </main>

  <aside class="side right"></aside>
  <div class="share"><span class="who">You are viewing Omveer Ujjawal's screen</span><span class="opts">View Options<svg width="7" height="5"><path d="M.8.8l2.700 2.700L6.200.8" fill="none" stroke="#fff" stroke-width="1.200"/></svg></span></div>
  <div class="viewbtn"><svg width="11" height="11"><path d="M0 4h11v7H0zM0 0h3v3H0zM4 0h3v3H4zM8 0h3v3H8z" fill="#fff"/></svg><span>View</span></div>
</div>

<footer class="bar">
  <div class="zi z-mute"><svg width="24" height="24" viewBox="0 0 24 24"><rect x="8.500" y="1" width="7" height="13" rx="3.500" fill="#a6a6a6"/><path d="M6 9v2c0 7 12 7 12 0V9M12 16v5M8 21.500h8" fill="none" stroke="#a6a6a6" stroke-width="1.500"/><path d="M.5 23.500L23 .5" stroke="#1a1a1a" stroke-width="4"/><path d="M.5 23.500L23 .5" stroke="#f0504c" stroke-width="1.400"/></svg><span>Unmute</span></div>
  <svg class="zc zc-mute" width="8" height="5"><path d="M1 4l3-3 3 3"/></svg>
  <div class="zi z-vid"><svg width="24" height="24" viewBox="0 0 24 24"><rect x="0" y="5" width="17" height="14" rx="2" fill="#a6a6a6"/><path d="M18.500 10l5.500-4v12l-5.500-4z" fill="#a6a6a6"/><path d="M1 23L24 .5" stroke="#1a1a1a" stroke-width="3"/><path d="M1 23.500L24 .5" stroke="#f0504c" stroke-width="1.400"/></svg><span>Start Video</span></div>
  <svg class="zc zc-vid" width="8" height="5"><path d="M1 4l3-3 3 3"/></svg>
  <div class="zi z-part"><svg width="24" height="24" viewBox="0 0 24 24" fill="#a6a6a6"><circle cx="7.500" cy="7.500" r="4"/><circle cx="17.500" cy="9" r="3.600"/><path d="M0 19.500c0-8 15-8 15 0 0 1-1 1.500-2 1.500H2c-1 0-2-.5-2-1.500zM16 21c1-2 0-5-1.500-6 4-2 9.500 0 9.500 4 0 1.500-1 2-2 2z"/></svg><span>Participants</span><em>10</em></div>
  <svg class="zc zc-part" width="8" height="5"><path d="M1 4l3-3 3 3"/></svg>
  <div class="zi z-chat"><svg width="24" height="24" viewBox="0 0 24 24"><path d="M6 3h12c3 0 4 1 4 4v6c0 3-1 4-4 4h-7l-5 4v-4c-3 0-4-1-4-4V7c0-3 1-4 4-4z" fill="#a6a6a6"/></svg><span>Chat</span></div>
  <div class="zi z-share"><svg width="24" height="24" viewBox="0 0 24 24"><rect x="0" y="3" width="24" height="18" rx="3" fill="#23d959"/><path d="M12 17V8M8 11.500L12 7.500l4 4" fill="none" stroke="#1a1a1a" stroke-width="1.700"/></svg><span>Share Screen</span></div>
  <div class="zi z-react"><svg width="24" height="24" viewBox="0 0 24 24"><circle cx="11" cy="12" r="9" fill="#a6a6a6"/><path d="M19.500 0v7M16 3.500h7" stroke="#1a1a1a" stroke-width="4"/><path d="M19.500 0v7M16 3.500h7" stroke="#a6a6a6" stroke-width="1.400"/><circle cx="8" cy="10.500" r="1.200" fill="#1a1a1a"/><circle cx="14" cy="10.500" r="1.200" fill="#1a1a1a"/><path d="M7 13.500c1 3.500 7 3.500 8 0" fill="none" stroke="#1a1a1a" stroke-width="1.300"/></svg><span>Reactions</span></div>
  <button class="leave">Leave</button>
</footer>
</body>
</html>
```
FILE: styles.css
```css
* { box-sizing: border-box; }
body { margin: 0; width: 1366px; height: 768px; overflow: hidden; background: #1a1a1a; font-family: "Open Sans", sans-serif; }
svg { display: block; flex: none; }
.defs { position: absolute; }
.stage { display: flex; height: 715px; position: relative; }
.side { background: #1a1a1a; }
.left { width: 47px; padding: 8px 0 0 8px; }
.right { width: 48px; }
.shield { width: 24px; height: 24px; border-radius: 5px; background: #222; display: grid; place-items: center; }
.desktop { width: 1271px; background: #fdfdfe; display: flex; flex-direction: column; overflow: hidden; }

/* title bar and tabs */
.titlebar { height: 24px; display: flex; justify-content: space-between; }
.winbtns { margin-right: 10px; }
.qat-p { font: bold 13px "Open Sans"; fill: #c8451f; }
.q { font: bold 11px "Open Sans"; fill: #fff; }
.tabs { height: 24px; display: flex; border-bottom: 1px solid #b6b8c0; font-size: 10.500px; letter-spacing: -.35px; color: #444; }
.tab { line-height: 24px; text-align: center; white-space: nowrap; }
.file { width: 56px; background: linear-gradient(#e5492a, #e9532e 65%, #f08a4a); color: #fff; margin-right: 3px; }
.home { width: 45px; height: 24px; border: 1px solid #b6b8c0; border-bottom: 0; border-radius: 2px 2px 0 0; background: #fff; line-height: 22px; }
.t-insert { width: 45px; }
.t-design { width: 50px; }
.t-trans { width: 68px; }
.t-anim { width: 73px; }
.t-show { width: 67px; }
.t-review { width: 54px; }
.t-view { width: 39px; }
.help { margin: 1px 0 0 auto; }

/* ribbon */
.ribbon { height: 85px; display: flex; background: linear-gradient(#fff, #fbfbfc 50%, #eaebf0); border-bottom: 2px solid #93969e; font-size: 10.500px; letter-spacing: -.33px; color: #3c3c40; }
.group { display: flex; flex-direction: column; border-right: 1px solid #d8d9e0; height: 83px; }
.g-clip { width: 135px; }
.g-slides { width: 108px; }
.g-font { width: 202px; }
.g-para { width: 268px; }
.g-draw { width: 311px; }
.g-edit { width: 72px; }
.body { height: 68px; display: flex; }
.cap { height: 14px; line-height: 15px; text-align: center; color: #77797f; position: relative; letter-spacing: -.15px; }
.cap.l { padding-right: 17px; }
.cap .ln { position: absolute; right: 5px; top: 3px; }
.big { display: flex; flex: none; flex-direction: column; align-items: center; padding-top: 3px; line-height: 14px; white-space: nowrap; }
.big svg { margin-bottom: 2px; }
.big .caret { margin-top: 5px; }
.big .inl .caret { margin: 0; vertical-align: 2px; }
.inl { display: inline-block; }
.w-paste { width: 43px; }
.w-new { width: 42px; }
.w-arr { width: 44px; }
.w-qs { width: 37px; }
.caret { display: inline-block; flex: none; border: 2.500px solid transparent; border-top: 3px solid #aaa; border-bottom: 0; }
.caret.dk { border-top-color: #5a5a60; }
.off { color: #a2a2a8; }
.rows { display: flex; flex-direction: column; }
.row { display: flex; align-items: center; white-space: nowrap; gap: 3px; }
.row .caret { margin-left: auto; }
.r21 { padding-top: 2px; }
.r21 .row { height: 21px; }
.r20 { padding-top: 1px; }
.r20 .row { height: 20px; }
.clip-rows { margin-left: 1px; }
.slide-rows { margin-left: 1px; }
.w-copy { width: 49px; }
.w-lay { width: 56px; }
.w-sec { width: 58px; gap: 1px; }
.para-rows { margin-left: 3px; }
.w-td { width: 89px; }
.w-at { width: 71px; }
.w-sa { width: 119px; }
.gallery { margin: 3px 0 0 4px; }
.w-sf { width: 70px; gap: 1px; }
.w-so { width: 91px; gap: 1px; }
.w-se { width: 87px; gap: 1px; }
.edit-rows { margin-left: 4px; }
.w-rep { width: 63px; gap: 3px; }
.w-sel { width: 54px; gap: 3px; }
.sf { font-family: "Liberation Serif", serif; letter-spacing: 0; }
.sz { font: 11px "Open Sans"; fill: #999; }
.ab { font: bold 8px "Open Sans"; letter-spacing: -.5px; }

/* slide list */
.work { height: 521px; display: flex; background: #c6c8cf; }
.outline { width: 115px; display: flex; flex-direction: column; background: linear-gradient(#d0d2da, #bfc1c8); }
.otabs { height: 23px; display: flex; }
.ot { width: 46px; background: #a9acb5; padding: 6px 0 0 3px; }
.ot.on { background: none; }
.ox { width: 23px; background: #b2b5be; border-left: 1px solid #8f929b; display: grid; place-items: center; }
.obody { display: flex; height: 498px; overflow: hidden; }
.thumbs { width: 98px; height: 497px; overflow: hidden; padding: 3px 0 0 2px; }
.th { width: 92px; height: 48.300px; display: flex; justify-content: space-between; padding: 3px 2px 0 0; }
.th b { font: bold 11.500px/16px "Open Sans"; color: #3b3c42; width: 15px; margin-top: 2px; flex: none; white-space: nowrap; display: flex; justify-content: flex-end; letter-spacing: -.2px; }
.sl { background: #fff; box-shadow: 0 0 2px 1px #8c8f96; }
.cur { background: linear-gradient(90deg, #fbe08a, #f9d25c); box-shadow: inset 0 0 0 1.500px #e0ad3a; height: 45px; margin-bottom: 3.300px; }
.tl { stroke: #a3a4ab; stroke-width: 1; stroke-dasharray: 3 .6 2 .5; fill: none; }
.tx { stroke: #c3c4c9; stroke-width: .8; stroke-dasharray: 3 .7 1.500 .7 4 .7; fill: none; }
.tiny { font: bold 4.500px "Open Sans"; fill: #33416d; letter-spacing: -.3px; }
.osb { width: 17px; background: #dcdfe8; display: flex; flex-direction: column; align-items: center; border-left: 1px solid #c5c8d0; }
.up { margin-top: 6px; border: 5px solid transparent; border-bottom: 5px solid #4a4c52; border-top: 0; }
.down { margin-top: auto; margin-bottom: 7px; border: 5px solid transparent; border-top: 5px solid #777a80; border-bottom: 0; }
.knob { width: 15px; height: 129px; margin-top: 6px; border: 1px solid #9ba0ab; background: linear-gradient(90deg, #f7f8fb, #d9dce5); display: grid; place-items: center; }
.knob i { width: 5px; height: 5px; border: solid #85888f; border-width: 1px 0; }
.split { width: 5px; background: #eef0f5; border: solid #9a9da6; border-width: 0 1px 0 1px; }

/* slide */
.pane { width: 1151px; display: flex; flex-direction: column; }
.canvas { height: 467px; display: flex; }
.view { width: 1134px; padding-left: 122px; background: linear-gradient(#cdcfd8, #b9bbc1); overflow: hidden; }
.vsb { background: #dfe2ea; }
.slide { width: 891px; height: 459px; background: #fdfdfe; box-shadow: 1px 0 7px 2px #77797f; position: relative; color: #58595e; font-size: 14.600px; display: flex; flex-direction: column; padding-top: 9px; }
.brand { position: absolute; left: 780px; top: -30px; display: flex; align-items: baseline; color: #939498; font: 36px/40px "Liberation Serif"; }
.bg { transform: scaleY(1.850); transform-origin: 0 31px; }
.bx { margin-left: -2px; }
.bc { font: 24px/40px "Open Sans"; color: #2bb5ee; padding-left: 6px; letter-spacing: -.7px; }
.pts { list-style: none; margin: 0; padding: 0 0 0 67px; }
.pts li { height: 27.200px; line-height: 24px; white-space: nowrap; position: relative; }
.pts li.long { letter-spacing: .027px; }
.pts li::before { content: "•"; position: absolute; left: -16px; }
u { text-decoration-line: underline; text-decoration-style: dotted; text-decoration-color: #e8303c; text-decoration-thickness: 1.500px; text-underline-offset: 2px; text-decoration-skip-ink: none; }
.code { margin: 10px 0 0 116px; width: 456px; height: 26px; background: #03264d; border: solid #b9c8d8; border-width: 1px 0; color: #fff; font: 16.650px/25px "Liberation Sans"; padding-left: 7px; white-space: pre; }
.second { margin-top: 37px; height: 27px; }
.table { margin: 30px 0 0 73px; width: 712px; height: 132px; display: grid; grid-template-columns: 355px 355px; grid-template-rows: 36px 46px 48px; border: 1px solid #dcdcd8; border-top-color: #a5e0cf; }
.hd { background: #c9cabf; color: #111; font: 16.500px/33px "Liberation Serif"; padding-left: 8px; border-bottom: 1px solid #dfe0da; }
.hd.r { padding-left: 9px; }
.td { line-height: 18px; padding: 6px 0 0 22px; white-space: nowrap; position: relative; }
.td::before { content: "•"; position: absolute; left: 6px; top: 4px; }
.alt { background: #f1f0ed; border-top: 1px solid #d8d8d4; }
.td.r { border-left: 1px solid #d5d5d2; }
.foot { margin: 69px 0 0 19px; display: flex; height: 28px; color: #808186; font-size: 9.300px; line-height: 28px; }
.copy { margin: 5px 0 0 16px; width: 290px; white-space: nowrap; }
.n1 { margin: -1px 0 0 288px; font-size: 11px; color: #a2a3a8; width: 222px; }
.n2 { font-weight: 600; font-size: 9.700px; margin-top: 5px; }
.ibeam { position: absolute; left: 484px; top: 161px; }
.notes { height: 54px; border-top: 3px solid #eceef3; background: #fdfdfe; display: flex; justify-content: space-between; font-size: 15.300px; color: #111; line-height: 32px; padding-left: 9px; box-shadow: inset 0 1px #a5a8b0; letter-spacing: -.03px; }
.nsb { background: #dfe2ea; margin-top: 1px; height: 50px; }

/* status bar */
.status { height: 21px; border-top: 2px solid #a3a5ad; background: linear-gradient(#eff0f3, #d8dae0 40%, #c3c5cd); display: flex; font-size: 10.500px; line-height: 18px; color: #4a4b50; letter-spacing: -.1px; }
.s1 { width: 76px; padding-left: 5px; border-right: 1px solid #a5a7af; white-space: nowrap; }
.s2 { width: 55px; padding-left: 6px; border-right: 1px solid #a5a7af; white-space: nowrap; letter-spacing: -.25px; }
.s3 { width: 29px; padding-left: 5px; border-right: 1px solid #a5a7af; }
.zoomer { margin: -2px 0 0 auto; overflow: visible; }
.pct { font: 10.500px "Open Sans"; fill: #55565c; }

/* taskbar */
.taskbar { height: 40px; display: flex; background: linear-gradient(90deg, #233a42, #213444 50%, #1b2742 80%, #1c2744); color: #fff; }
.tk { width: 49.700px; display: grid; place-items: center; position: relative; flex: none; }
.tk.s { width: 47.800px; }
.tk.s + .tk:not(.s) { margin-left: 1.200px; }
.run::after { content: ""; position: absolute; left: 4.500px; right: 4.500px; bottom: 0; height: 2px; background: #76b9ed; }
.two::after { background: linear-gradient(90deg, #76b9ed 76%, #47779c 76%); }
.act { background: #4b5968; width: 48px; margin: 0 .85px; }
.act::after { left: 0; right: 0; }
.lo { margin-top: 3px; }
.tray { margin: 0 0 0 auto; }
.clock { width: 76px; padding: 2px 8px 0 0; align-items: center; font-size: 11.800px; line-height: 18.500px; letter-spacing: -.2px; display: flex; flex-direction: column; white-space: nowrap; }
.ie { font: bold 31px "Open Sans"; fill: #52c3f2; }
.ppt { font: bold 17px "Open Sans"; fill: #d04a20; }
.jv { font: bold 5px "Open Sans"; fill: #e08530; }
.nb { font: 600 11px "Open Sans"; fill: #fff; }

/* meeting overlays */
.share { position: absolute; left: 484px; top: 0; display: flex; height: 22px; line-height: 22px; border-radius: 0 0 5px 5px; overflow: hidden; white-space: nowrap; }
.who { width: 261px; padding-left: 15px; background: #23d95b; color: #39453e; font-size: 12px; font-weight: 700; letter-spacing: -.38px; }
.opts { width: 121px; padding-left: 29px; background: #242526; color: #fff; font-size: 11.500px; font-weight: 600; letter-spacing: -.35px; display: flex; align-items: center; gap: 6px; }
.viewbtn { position: absolute; left: 1303px; top: 8px; width: 55px; height: 26px; border-radius: 6px; background: rgba(70, 70, 70, .35); color: #fff; display: flex; align-items: center; gap: 5px; padding-left: 7px; font-size: 11.500px; letter-spacing: -.2px; }

.bar { height: 53px; display: flex; color: #b9b9b9; font-size: 12px; letter-spacing: -.33px; }
.zi { display: flex; flex-direction: column; align-items: center; padding-top: 5px; line-height: 17px; gap: 2px; white-space: nowrap; position: relative; }
.zc { margin-top: 15px; fill: none; stroke: #b0b0b0; stroke-width: 1.300; }
.z-mute { width: 60px; margin-left: 16px; }
.zc-mute { margin-left: -2px; }
.z-vid { width: 70px; margin-left: 22px; }
.zc-vid { margin-left: -2px; }
.z-part { width: 70px; margin-left: 383px; }
.z-part em { position: absolute; left: 50px; top: 6px; font-style: normal; letter-spacing: 0; }
.zc-part { margin-left: 14px; }
.z-chat { width: 40px; margin-left: 28px; }
.z-share { width: 80px; margin-left: 28.500px; color: #23d959; }
.z-react { width: 60px; margin-left: 19.500px; }
.leave { margin: 13px 0 0 382px; width: 61px; height: 27px; border: 0; border-radius: 7px; background: #b92626; color: #fff; font: 700 12px "Open Sans"; letter-spacing: -.3px; padding: 0; }
```
